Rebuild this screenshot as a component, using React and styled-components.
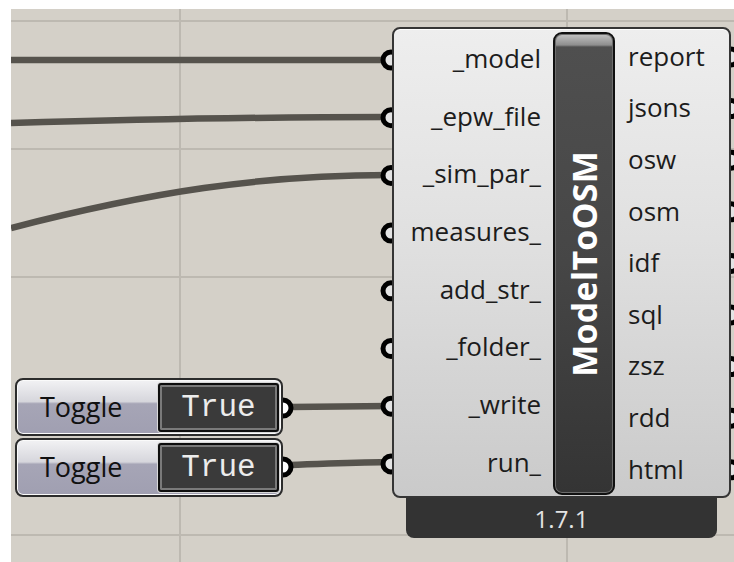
import styled, { createGlobalStyle } from "styled-components";

const GlobalStyle = createGlobalStyle`
  html, body {
    margin: 0;
    padding: 0;
    background: #ffffff;
  }
  body {
    font-family: "Open Sans", "Noto Sans", sans-serif;
  }
`;

const Canvas = styled.div`
  position: relative;
  margin: 9px 0 0 11px;
  width: 723px;
  height: 553px;
  overflow: hidden;
  background-color: #d4d0c8;
`;

const WireLayer = styled.svg`
  position: absolute;
  left: 0;
  top: 0;
`;

const Node = styled.div`
  position: absolute;
  left: ${(p) => p.$x}px;
  top: ${(p) => p.$y}px;
`;

const Component = styled.div`
  display: flex;
  flex-direction: column;
  align-items: center;
  width: 339px;
`;

const Body = styled.div`
  position: relative;
  z-index: 2;
  box-sizing: border-box;
  width: 339px;
  height: 471px;
  display: grid;
  grid-template-columns: 159px 62px 1fr;
  border: 2px solid #353535;
  border-radius: 8px;
  background: linear-gradient(#eeeeee, #e0e0e0 45%, #cacaca);
  box-shadow: inset 0 1px 0 #ffffff;
`;

const InputList = styled.div`
  display: flex;
  flex-direction: column;
  align-items: flex-end;
  padding: 0 12px 0 0;
`;

const OutputList = styled.div`
  display: flex;
  flex-direction: column;
  padding: 1px 0 0 13px;
`;

const Param = styled.div`
  height: ${(p) => p.$h}px;
  display: flex;
  align-items: center;
  font-size: 26px;
  line-height: 1;
  color: #1c1c1c;
  white-space: nowrap;
`;

const NameBar = styled.div`
  margin: 3px 0 1px;
  display: flex;
  align-items: center;
  justify-content: center;
  border: 2px solid #101010;
  border-radius: 9px;
  background: linear-gradient(
    #c4c4c4 0px,
    #8e8e8e 11px,
    #4f4f4f 13px,
    #464646 50%,
    #343434 100%
  );
  box-shadow: inset 0 0 0 1px #6c6c6c;
`;

const NameText = styled.span`
  writing-mode: vertical-rl;
  transform: rotate(180deg);
  font-size: 34px;
  font-weight: 700;
  color: #ffffff;
  letter-spacing: 0.2px;
`;

const VersionTab = styled.div`
  position: relative;
  z-index: 1;
  margin-top: -4px;
  width: 311px;
  height: 44px;
  padding-top: 4px;
  box-sizing: border-box;
  display: flex;
  align-items: center;
  justify-content: center;
  background: #333333;
  border-radius: 0 0 8px 8px;
  font-size: 24px;
  color: #e4e4e4;
`;

const Toggle = styled.div`
  box-sizing: border-box;
  width: 268px;
  height: ${(p) => p.$h}px;
  display: flex;
  align-items: center;
  justify-content: space-between;
  padding: 0 2px 0 23px;
  border: 2px solid #2c2c2c;
  border-radius: 8px;
  background: linear-gradient(
    #f2f2f4 0%,
    #d6d6dc 40%,
    #a6a5b6 44%,
    #a09fb1 100%
  );
  box-shadow: inset 0 0 0 1px #fafafa;
`;

const ToggleLabel = styled.span`
  font-size: 27px;
  line-height: 1;
  color: #111111;
  padding-bottom: 2px;
`;

const ValueBox = styled.div`
  box-sizing: border-box;
  width: 121px;
  height: 49px;
  display: flex;
  align-items: center;
  justify-content: center;
  border: 2px solid #0e0e0e;
  border-radius: 3px;
  background: #3a3a3a;
  box-shadow: inset 0 0 0 2px #7a7a7a, 0 0 0 1px #d8d8d8;
  font-family: "Liberation Mono", monospace;
  font-size: 31px;
  color: #ececec;
`;

const inputs = [
  "_model",
  "_epw_file",
  "_sim_par_",
  "measures_",
  "add_str_",
  "_folder_",
  "_write",
  "run_",
];

const outputs = ["report", "jsons", "osw", "osm", "idf", "sql", "zsz", "rdd", "html"];

const inputYs = inputs.map((_, i) => 60 + i * 57.7);
const outputYs = outputs.map((_, i) => 57 + i * 51.6);

function Grip({ x, y, fill }) {
  return <circle cx={x} cy={y} r={8} fill={fill} stroke="#000" strokeWidth={5} />;
}

function Wires() {
  const wire = { fill: "none", stroke: "#56534d", strokeWidth: 6.5 };
  return (
    <WireLayer width={723} height={553} viewBox="11 9 723 553">
      <g stroke="#bdb9b1" strokeWidth={2}>
        <line x1={11} y1={21} x2={734} y2={21} />
        <line x1={11} y1={149} x2={734} y2={149} />
        <line x1={11} y1={277} x2={734} y2={277} />
        <line x1={11} y1={535} x2={734} y2={535} />
        <line x1={180} y1={9} x2={180} y2={562} />
        <line x1={567} y1={9} x2={567} y2={562} />
      </g>
      <path d="M 11 60 L 390 60" {...wire} />
      <path d="M 11 123 C 150 119, 250 117, 390 117" {...wire} />
      <path d="M 11 228 C 150 192, 260 175, 390 175" {...wire} />
      <path d="M 290 407 L 390 406" {...wire} />
      <path d="M 290 465 C 330 464, 350 462, 396 462" {...wire} />
      {inputYs.map((y) => (
        <Grip key={y} x={391} y={y} fill="#e4e4e4" />
      ))}
      {outputYs.map((y) => (
        <Grip key={y} x={731} y={y} fill="#e4e4e4" />
      ))}
      <Grip x={283} y={408} fill="#ffffff" />
      <Grip x={283} y={467} fill="#ffffff" />
    </WireLayer>
  );
}

export default function App() {
  return (
    <>
      <GlobalStyle />
      <Canvas>
        <Wires />

        <Node $x={381} $y={18}>
          <Component>
            <Body>
              <InputList>
                {inputs.map((name) => (
                  <Param key={name} $h={57.7}>
                    {name}
                  </Param>
                ))}
              </InputList>
              <NameBar>
                <NameText>ModelToOSM</NameText>
              </NameBar>
              <OutputList>
                {outputs.map((name) => (
                  <Param key={name} $h={51.6}>
                    {name}
                  </Param>
                ))}
              </OutputList>
            </Body>
            <VersionTab>1.7.1</VersionTab>
          </Component>
        </Node>

        <Node $x={4} $y={369}>
          <Toggle $h={58}>
            <ToggleLabel>Toggle</ToggleLabel>
            <ValueBox>True</ValueBox>
          </Toggle>
        </Node>
        <Node $x={4} $y={429}>
          <Toggle $h={59}>
            <ToggleLabel>Toggle</ToggleLabel>
            <ValueBox>True</ValueBox>
          </Toggle>
        </Node>
      </Canvas>
    </>
  );
}
